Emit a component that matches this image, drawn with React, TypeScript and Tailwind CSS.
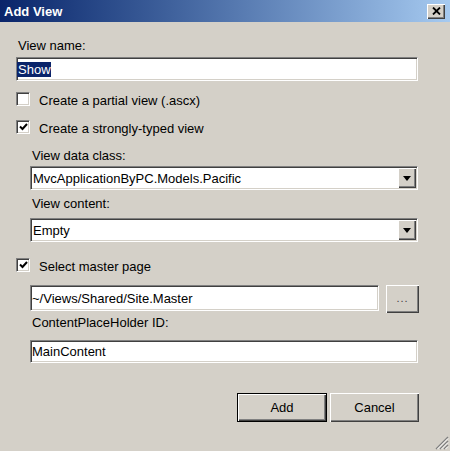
import type { ReactNode } from "react";

// classic 3D bevels
const sunken =
  "border border-t-[#808080] border-l-[#808080] border-b-white border-r-white shadow-[inset_1px_1px_#404040,inset_-1px_-1px_#d4d0c8]";
const raised = "shadow-[inset_1px_1px_#ffffff,inset_-1px_-1px_#404040,inset_-2px_-2px_#808080]";

function Label({ children }: { children: ReactNode }) {
  return <div className="pl-[2px] leading-[15px] text-black">{children}</div>;
}

function TextBox({ value, className = "", selected = false }: { value: string; className?: string; selected?: boolean }) {
  return (
    <div className={`flex items-center bg-white ${sunken} ${className}`}>
      <span className={`pl-[1px] leading-[15px] ${selected ? "bg-[#0a246a] text-white" : "text-black"}`}>{value}</span>
    </div>
  );
}

function ComboBox({ value }: { value: string }) {
  return (
    <div className={`flex h-[24px] items-center bg-white p-[1px] ${sunken}`}>
      <span className="min-w-0 flex-1 pl-[1px] leading-[15px] text-black">{value}</span>
      <div className={`flex h-full w-[18px] shrink-0 items-center justify-center bg-[#d4d0c8] ${raised}`}>
        <svg width="8" height="5" viewBox="0 0 8 5" className="mr-[1px]">
          <path d="M0 0h8L4 5z" fill="#000" />
        </svg>
      </div>
    </div>
  );
}

function CheckBox({ label, checked }: { label: string; checked: boolean }) {
  return (
    <div className="flex h-[16px] items-start">
      <div className={`flex h-[14px] w-[14px] shrink-0 items-center justify-center bg-white ${sunken}`}>
        {checked && (
          <svg width="9" height="8" viewBox="0 0 9 8">
            <path d="M1 3.5l2.5 2.5L8 1" stroke="#000" strokeWidth="2" fill="none" />
          </svg>
        )}
      </div>
      <span className="ml-[9px] mt-[1px] leading-[15px] text-black">{label}</span>
    </div>
  );
}

function Button({ children, primary = false, className = "" }: { children: ReactNode; primary?: boolean; className?: string }) {
  const face = (
    <div className={`flex h-full w-full items-center justify-center bg-[#d4d0c8] text-black ${raised}`}>{children}</div>
  );
  return primary ? (
    <div className={`border border-black ${className}`}>{face}</div>
  ) : (
    <div className={className}>{face}</div>
  );
}

export default function App() {
  return (
    <div className="relative h-[451px] w-[450px] overflow-hidden bg-[#d4d0c8] font-['Liberation_Sans',Arial,sans-serif] text-[13px]">
      {/* caption */}
      <div className="flex h-[22px] items-center justify-between bg-linear-to-r from-[#0a246a] to-[#a6caf0] pl-[4px] pr-[5px]">
        <span className="text-[13px] font-bold leading-[15px] text-white">Add View</span>
        <div className={`flex h-[15px] w-[18px] items-center justify-center bg-[#d4d0c8] ${raised}`}>
          <svg width="9" height="8" viewBox="0 0 9 8">
            <path d="M1 0.5l7 7M8 0.5l-7 7" stroke="#000" strokeWidth="1.8" />
          </svg>
        </div>
      </div>

      <div className="flex flex-col pl-4 pr-8">
        <div className="mt-[16px]">
          <Label>View name:</Label>
        </div>
        <TextBox value="Show" selected className="mt-[4px] h-[24px]" />

        <div className="mt-[11px]">
          <CheckBox label="Create a partial view (.ascx)" checked={false} />
        </div>
        <div className="mt-[12px]">
          <CheckBox label="Create a strongly-typed view" checked />
        </div>

        <div className="flex flex-col pl-[14px]">
          <div className="mt-[12px]">
            <Label>View data class:</Label>
          </div>
          <div className="mt-[3px]">
            <ComboBox value="MvcApplicationByPC.Models.Pacific" />
          </div>
          <div className="mt-[6px]">
            <Label>View content:</Label>
          </div>
          <div className="mt-[7px]">
            <ComboBox value="Empty" />
          </div>
        </div>

        <div className="mt-[16px]">
          <CheckBox label="Select master page" checked />
        </div>

        <div className="flex flex-col pl-[14px]">
          <div className="mt-[11px] flex items-start gap-[7px]">
            <TextBox value="~/Views/Shared/Site.Master" className="h-[26px] flex-1" />
            <Button className="mr-[-1px] h-[28px] w-[33px] shrink-0">
              <span className="pb-[2px] text-[11px] tracking-[1px] text-[#404040]">...</span>
            </Button>
          </div>
          <div className="mt-[2px]">
            <Label>ContentPlaceHolder ID:</Label>
          </div>
          <TextBox value="MainContent" className="mt-[10px] h-[23px]" />
        </div>

        <div className="mt-[30px] flex justify-end gap-[3px]">
          <Button primary className="h-[29px] w-[90px]">
            Add
          </Button>
          <Button className="mr-[-1px] h-[29px] w-[89px]">Cancel</Button>
        </div>
      </div>

      {/* size grip */}
      <svg className="absolute bottom-[1px] right-[1px]" width="14" height="14" viewBox="0 0 14 14">
        <path d="M13 1L1 13M13 5L5 13M13 9L9 13" stroke="#808080" strokeWidth="1.4" />
        <path d="M13 2.5L2.5 13M13 6.5L6.5 13M13 10.5L10.5 13" stroke="#ffffff" strokeWidth="1" />
      </svg>
    </div>
  );
}
